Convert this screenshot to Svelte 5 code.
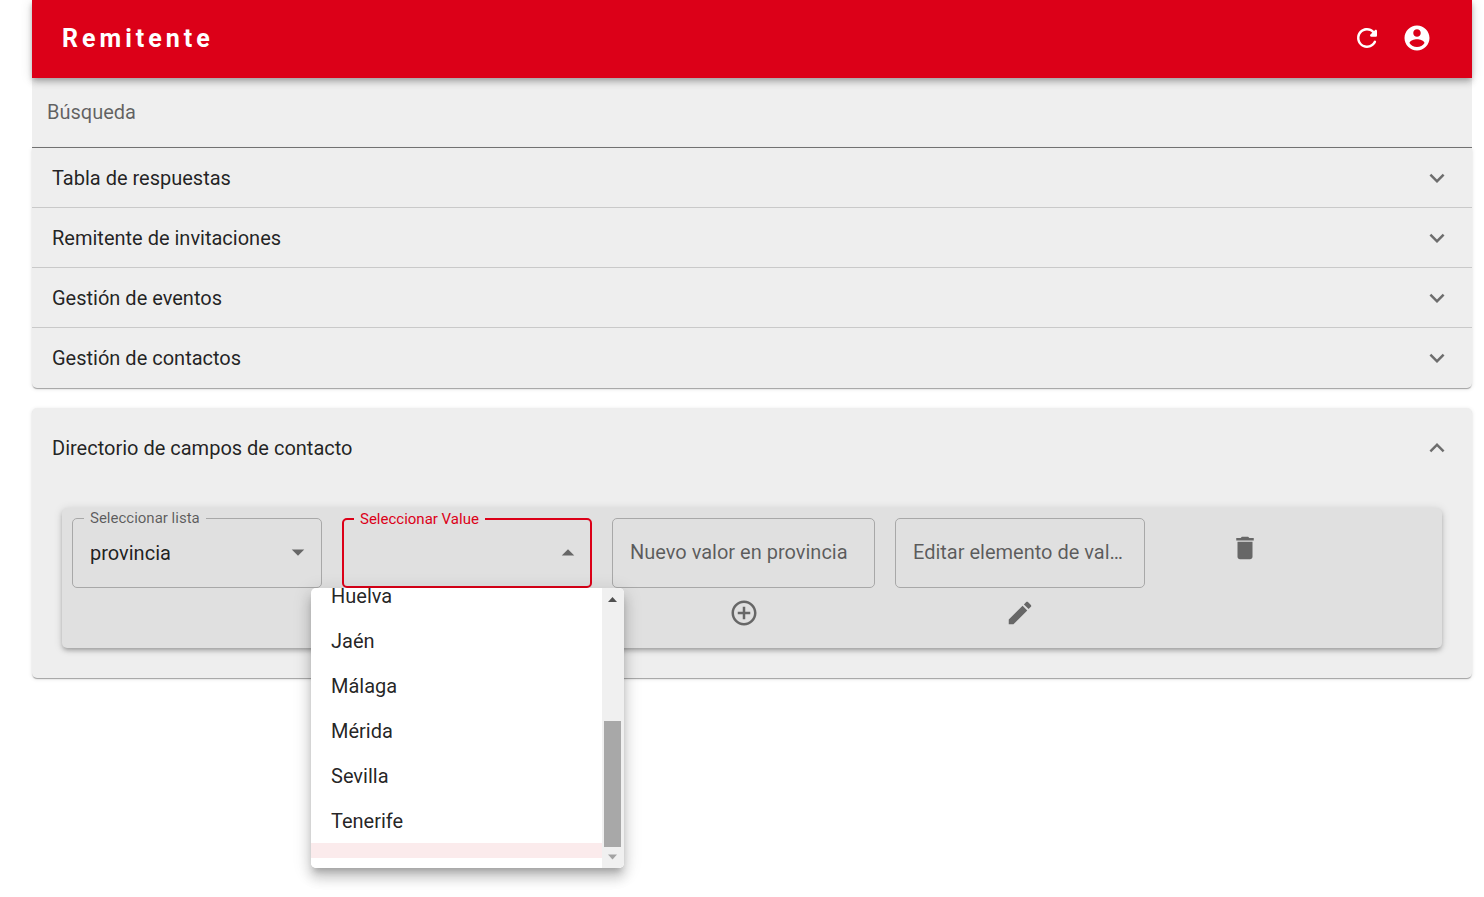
<script>
  const sections = [
    'Tabla de respuestas',
    'Remitente de invitaciones',
    'Gestión de eventos',
    'Gestión de contactos'
  ];
  const values = ['Huelva', 'Jaén', 'Málaga', 'Mérida', 'Sevilla', 'Tenerife'];

  let search = $state('');
  let list = $state('provincia');
  let value = $state('');
  let newValue = $state('');
  let editedValue = $state('');
</script>

{#snippet icon(path, flipped = false)}
  <svg class="icon" class:flipped viewBox="0 0 24 24" aria-hidden="true"><path d={path} /></svg>
{/snippet}

<div class="page">
  <header>
    <h1>Remitente</h1>
    <button class="icon-button" aria-label="Actualizar">
      {@render icon('M17.65 6.35c-1.63-1.63-3.94-2.57-6.48-2.31-3.67.37-6.69 3.35-7.1 7.02C3.52 15.91 7.27 20 12 20c3.19 0 5.93-1.87 7.21-4.56.32-.67-.16-1.44-.9-1.44-.37 0-.72.2-.88.53-1.13 2.43-3.84 3.97-6.8 3.31-2.22-.49-4.01-2.3-4.48-4.52C5.31 9.44 8.26 6 12 6c1.66 0 3.14.69 4.22 1.78l-1.51 1.51c-.63.63-.19 1.71.7 1.71H19c.55 0 1-.45 1-1V6.41c0-.89-1.08-1.34-1.71-.71l-.64.65z')}
    </button>
    <button class="icon-button" aria-label="Cuenta">
      {@render icon('M12 2C6.48 2 2 6.48 2 12s4.48 10 10 10 10-4.48 10-10S17.52 2 12 2zm0 3c1.66 0 3 1.34 3 3s-1.34 3-3 3-3-1.34-3-3 1.34-3 3-3zm0 14.2c-2.5 0-4.71-1.28-6-3.22.03-1.99 4-3.08 6-3.08 1.99 0 5.97 1.09 6 3.08-1.29 1.94-3.5 3.22-6 3.22z')}
    </button>
  </header>

  <main>
    <input class="search" type="text" placeholder="Búsqueda" aria-label="Búsqueda" bind:value={search} />

    <div class="panel">
      {#each sections as title}
        <button class="summary" aria-expanded="false">
          <span>{title}</span>
          {@render icon('M16.59 8.59L12 13.17 7.41 8.59 6 10l6 6 6-6z')}
        </button>
      {/each}
    </div>

    <section class="panel open">
      <button class="summary" aria-expanded="true">
        <span>Directorio de campos de contacto</span>
        {@render icon('M16.59 8.59L12 13.17 7.41 8.59 6 10l6 6 6-6z', true)}
      </button>

      <div class="editor">
        <div class="column">
          <fieldset>
            <legend><label for="list">Seleccionar lista</label></legend>
            <select id="list" bind:value={list}>
              <option>provincia</option>
            </select>
            {@render icon('M7 10l5 5 5-5z')}
          </fieldset>
        </div>

        <div class="column">
          <fieldset class="focused">
            <legend><label for="value">Seleccionar Value</label></legend>
            <select id="value" bind:value>
              <option value=""></option>
              {#each values as name}<option>{name}</option>{/each}
            </select>
            {@render icon('M7 10l5 5 5-5z', true)}
          </fieldset>
          <div class="menu">
            <ul role="listbox" aria-label="Seleccionar Value">
              {#each values as name}
                <li role="option" aria-selected={name === value}>{name}</li>
              {/each}
              <li class="blank" role="option" aria-selected={value === ''} aria-label="Ninguno"></li>
            </ul>
            <div class="scrollbar" aria-hidden="true">
              <svg viewBox="0 0 21 21"><path d="M6 14l4.500-5 4.500 5z" /></svg>
              <div class="thumb"></div>
              <svg class="end" viewBox="0 0 21 21"><path d="M6 7.500h9l-4.500 5z" /></svg>
            </div>
          </div>
        </div>

        <div class="column wide">
          <input class="field" type="text" placeholder="Nuevo valor en provincia" aria-label="Nuevo valor en provincia" bind:value={newValue} />
          <button class="icon-button" aria-label="Añadir">
            {@render icon('M13 7h-2v4H7v2h4v4h2v-4h4v-2h-4V7zm-1-5C6.48 2 2 6.48 2 12s4.48 10 10 10 10-4.480 10-10S17.52 2 12 2zm0 18c-4.410 0-8-3.590-8-8s3.590-8 8-8 8 3.590 8 8-3.590 8-8 8z')}
          </button>
        </div>

        <div class="column">
          <input class="field" type="text" placeholder="Editar elemento de valor" aria-label="Editar elemento de valor" bind:value={editedValue} />
          <button class="icon-button" aria-label="Editar">
            {@render icon('M3 17.250V21h3.750L17.810 9.940l-3.750-3.750L3 17.250zM20.710 7.040c.39-.39.39-1.020 0-1.410l-2.340-2.340c-.39-.39-1.020-.39-1.410 0l-1.830 1.830 3.750 3.750 1.830-1.830z')}
          </button>
        </div>

        <div class="column remove">
          <button class="icon-button" aria-label="Eliminar">
            {@render icon('M6 19c0 1.100.9 2 2 2h8c1.100 0 2-.9 2-2V7H6v12zM19 4h-3.500l-1-1h-5l-1 1H5v2h14V4z')}
          </button>
        </div>
      </div>
    </section>
  </main>
</div>

<style>
  :global(body) {
    margin: 0;
    background: #fff;
  }

  .page,
  .page * {
    box-sizing: border-box;
  }

  .page {
    min-height: 100vh;
    margin: 0 12px 0 32px;
    font-family: Roboto, "Liberation Sans", sans-serif;
    font-size: 20px;
    line-height: 30px;
    color: rgba(0, 0, 0, 0.87);
  }

  button,
  input,
  select {
    font: inherit;
    color: inherit;
    margin: 0;
  }

  button {
    border: 0;
    background: none;
    cursor: pointer;
  }

  .icon {
    display: block;
    flex: none;
    width: 30px;
    height: 30px;
    fill: currentColor;
  }

  .flipped {
    transform: rotate(180deg);
  }

  .icon-button {
    display: flex;
    padding: 10px;
    color: rgba(0, 0, 0, 0.54);
  }

  header {
    position: relative;
    z-index: 1;
    display: flex;
    align-items: center;
    height: 78px;
    padding: 0 30px 2px;
    background: #dc0018;
    color: #fff;
    box-shadow:
      0 2px 5px -1px rgba(0, 0, 0, 0.2),
      0 5px 6px 0 rgba(0, 0, 0, 0.14),
      0 1px 12px 0 rgba(0, 0, 0, 0.12);
  }

  header .icon-button {
    color: #fff;
  }

  h1 {
    flex: 1;
    margin: 0;
    padding-top: 2px;
    font-size: 25px;
    font-weight: 700;
    letter-spacing: 4px;
  }

  .search {
    display: block;
    width: 100%;
    height: 70px;
    padding: 0 15px 2px;
    border: 0;
    border-bottom: 1px solid #757575;
    background: #efefef;
    outline: 0;
  }

  ::placeholder {
    color: rgba(0, 0, 0, 0.6);
    opacity: 1;
  }

  .panel {
    border-radius: 0 0 5px 5px;
    background: #eee;
    box-shadow:
      0 2px 1px -1px rgba(0, 0, 0, 0.2),
      0 1px 1px 0 rgba(0, 0, 0, 0.14),
      0 1px 4px 0 rgba(0, 0, 0, 0.12);
  }

  .summary {
    display: flex;
    align-items: center;
    justify-content: space-between;
    width: 100%;
    height: 60px;
    padding: 0 20px;
    border-bottom: 1px solid #c9c9c9;
    text-align: left;
  }

  .summary:last-child,
  .open .summary {
    border-bottom: 0;
  }

  .summary .icon {
    color: rgba(0, 0, 0, 0.54);
  }

  .open {
    margin-top: 20px;
    padding-bottom: 30px;
    border-radius: 5px;
  }

  .open .summary {
    height: 80px;
  }

  .editor {
    display: flex;
    gap: 20px;
    margin: 20px 30px 0;
    padding: 10px;
    border-radius: 5px;
    background: #e0e0e0;
    box-shadow:
      0 3px 4px -2px rgba(0, 0, 0, 0.2),
      0 3px 5px 0 rgba(0, 0, 0, 0.14),
      0 1px 10px 0 rgba(0, 0, 0, 0.12);
  }

  .column {
    position: relative;
    display: flex;
    flex-direction: column;
    align-items: center;
    width: 250px;
  }

  .wide {
    width: 263px;
  }

  .remove {
    width: 160px;
    padding-top: 5px;
  }

  fieldset {
    position: relative;
    width: 100%;
    height: 77px;
    min-width: 0;
    margin: -7px 0 0;
    padding: 0;
    border: 1px solid #a8a8a8;
    border-radius: 5px;
  }

  legend {
    margin-left: 11px;
    padding: 0 6px;
    font-size: 15px;
    line-height: 14px;
    color: rgba(0, 0, 0, 0.6);
  }

  label {
    display: block;
  }

  .focused {
    height: 76px;
    margin-top: -6px;
    border: 2px solid #dc0018;
  }

  .focused legend {
    margin-left: 10px;
    color: #dc0018;
  }

  select {
    display: block;
    width: 100%;
    height: 56px;
    padding: 0 40px 0 17px;
    border: 0;
    background: none;
    appearance: none;
    outline: 0;
  }

  fieldset .icon {
    position: absolute;
    right: 8px;
    bottom: 14px;
    color: rgba(0, 0, 0, 0.54);
    pointer-events: none;
  }

  .focused .icon {
    right: 7px;
  }

  .field {
    width: 100%;
    height: 70px;
    padding: 0 17px 2px;
    border: 1px solid #a8a8a8;
    border-radius: 5px;
    background: none;
    outline: 0;
    text-overflow: ellipsis;
  }

  .field::placeholder {
    text-overflow: ellipsis;
  }

  .menu {
    position: absolute;
    z-index: 2;
    top: 70px;
    left: -31px;
    display: flex;
    width: 313px;
    height: 280px;
    overflow: hidden;
    border-radius: 5px;
    background: #fff;
  }

  .column:has(.menu)::after {
    content: "";
    position: absolute;
    z-index: 1;
    top: 70px;
    left: -31px;
    width: 313px;
    height: 280px;
    border-radius: 5px;
    box-shadow:
      0 6px 6px -3px rgba(0, 0, 0, 0.2),
      0 10px 12px 1px rgba(0, 0, 0, 0.14),
      0 4px 18px 2px rgba(0, 0, 0, 0.12);
  }

  ul {
    display: flex;
    flex: 1;
    flex-direction: column;
    justify-content: flex-end;
    margin: 0;
    padding: 0 0 10px;
    list-style: none;
  }

  li {
    flex: none;
    height: 45px;
    padding: 8px 20px;
    line-height: 31px;
    cursor: pointer;
  }

  .blank {
    height: 15px;
    padding: 0;
    background: #fbebec;
  }

  .scrollbar {
    display: flex;
    flex-direction: column;
    justify-content: flex-end;
    width: 22px;
    padding-right: 1px;
    background: #f0f0f0;
  }

  .scrollbar svg {
    display: block;
    flex: none;
    width: 21px;
    height: 21px;
    margin-bottom: auto;
    fill: #505050;
  }

  .scrollbar .end {
    margin: 0;
    fill: #a3a3a3;
  }

  .thumb {
    height: 126px;
    margin: 0 2px;
    background: #a8a8a8;
  }
</style>
